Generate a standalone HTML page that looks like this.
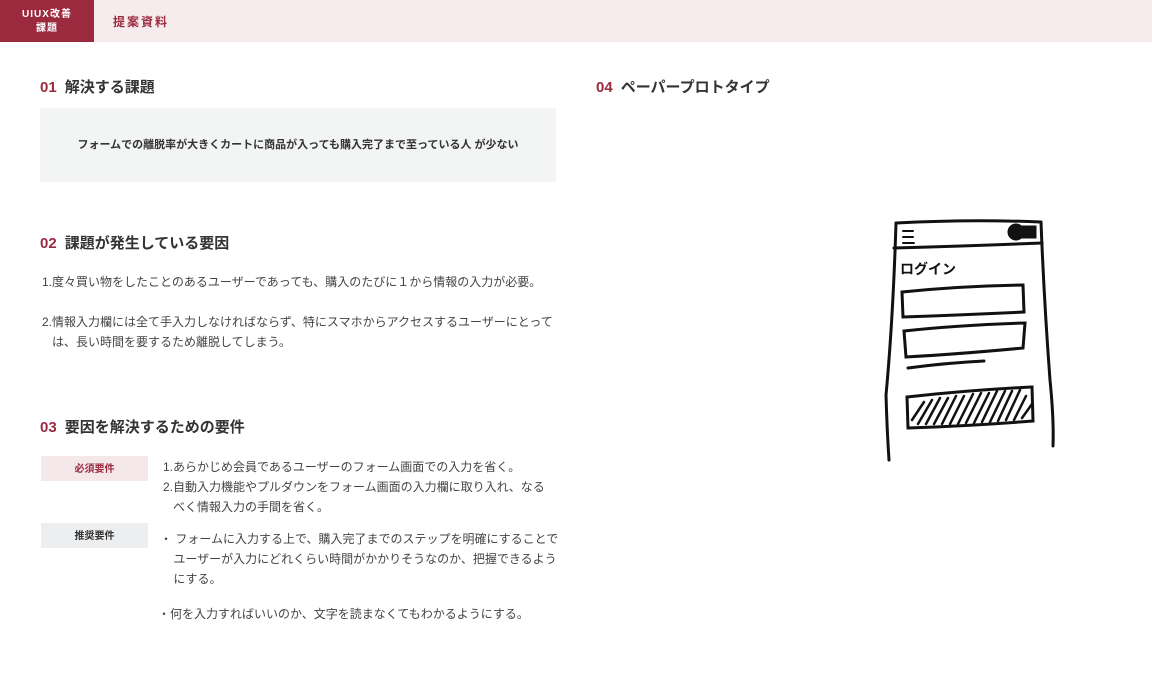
<!DOCTYPE html>
<html><head><meta charset="utf-8"><style>
*{margin:0;padding:0;box-sizing:border-box}
body{width:1152px;height:700px;background:#fff;font-family:"Liberation Sans","Noto Sans CJK JP",sans-serif;color:#333;position:relative;overflow:hidden}
.hdr{position:absolute;left:0;top:0;width:1152px;height:42px;background:#f6ecee}
.logo{position:absolute;left:0;top:0;width:94px;height:42px;background:#9b2a3f;color:#fff;font-size:10px;font-weight:bold;text-align:center;line-height:14px;padding-top:8px;letter-spacing:1px}
.tab{position:absolute;left:113px;top:13px;font-size:12px;color:#9b2a3f;font-weight:bold;letter-spacing:2px}
.h{position:absolute;font-size:15px;font-weight:bold;color:#333}
.h b{color:#9b2a3f;margin-right:8px}
.box{position:absolute;left:40px;top:108px;width:516px;height:74px;background:#f3f4f4;font-size:11px;font-weight:bold;text-align:center;line-height:74px;color:#333}
.t{position:absolute;font-size:12px;line-height:20px;color:#444}
.tag{position:absolute;left:41px;width:107px;height:25px;font-size:10px;font-weight:bold;text-align:center;line-height:27px}
</style></head><body>
<div class="hdr"></div>
<div class="logo">UIUX改善<br>課題</div>
<div class="tab">提案資料</div>
<div class="h" style="left:40px;top:76px"><b>01</b>解決する課題</div>
<div class="box">フォームでの離脱率が大きくカートに商品が入っても購入完了まで至っている人 が少ない</div>
<div class="h" style="left:40px;top:232px"><b>02</b>課題が発生している要因</div>
<div class="t" style="left:42px;top:272px">1.度々買い物をしたことのあるユーザーであっても、購入のたびに１から情報の入力が必要。</div>
<div class="t" style="left:42px;top:312px;width:520px">2.情報入力欄には全て手入力しなければならず、特にスマホからアクセスするユーザーにとって<br>&nbsp;&nbsp;&nbsp;は、長い時間を要するため離脱してしまう。</div>
<div class="h" style="left:40px;top:416px"><b>03</b>要因を解決するための要件</div>
<div class="tag" style="top:456px;background:#f4e8ea;color:#9b2a3f">必須要件</div>
<div class="tag" style="top:523px;background:#eceeef;color:#333">推奨要件</div>
<div class="t" style="left:163px;top:457px;line-height:20px">1.あらかじめ会員であるユーザーのフォーム画面での入力を省く。<br>2.自動入力機能やプルダウンをフォーム画面の入力欄に取り入れ、なる<br>&nbsp;&nbsp;&nbsp;べく情報入力の手間を省く。</div>
<div class="t" style="left:160px;top:529px;line-height:20px">・ フォームに入力する上で、購入完了までのステップを明確にすることで<br>&nbsp;&nbsp;&nbsp;&nbsp;ユーザーが入力にどれくらい時間がかかりそうなのか、把握できるよう<br>&nbsp;&nbsp;&nbsp;&nbsp;にする。</div>
<div class="t" style="left:158px;top:604px">・何を入力すればいいのか、文字を読まなくてもわかるようにする。</div>
<div class="h" style="left:596px;top:76px"><b>04</b>ペーパープロトタイプ</div>
<svg style="position:absolute;left:0;top:0" width="1152" height="700" fill="none" stroke="#111" stroke-width="3" stroke-linecap="round">
<path d="M896 223 Q970 219 1041 222"/>
<path d="M896 223 Q893 320 886 395 Q887 430 889 460"/>
<path d="M1041 222 Q1044 300 1050 380 Q1054 420 1053 446"/>
<path d="M894 248 Q970 246 1042 243"/>
<path d="M903 231h10M903 237h10M903 243h11" stroke-width="2"/>
<circle cx="1016" cy="232" r="7" fill="#111"/>
<path d="M1022 226h14v12h-14z" fill="#111" stroke-width="1"/>
<text x="900" y="274" font-size="14" font-weight="bold" fill="#111" stroke="none" font-family="Noto Sans CJK JP">ログイン</text>
<path d="M902 292 Q960 286 1023 285 L1024 312 Q960 315 903 317 Z"/>
<path d="M904 331 Q960 325 1025 323 L1023 348 Q960 354 906 357 Z"/>
<path d="M908 368 Q945 363 984 361"/>
<path d="M907 397 Q970 390 1032 387 L1033 421 Q970 426 908 428 Z"/>
<path d="M912 420l12-18M918 424l14-24M926 424l14-26M934 424l14-26M942 424l14-28M950 424l14-28M958 424l15-30M966 423l15-30M974 423l15-30M982 422l15-31M990 422l15-31M998 421l14-30M1006 420l14-30M1014 420l12-24M1022 418l10-14" stroke-width="2.5"/>
</svg>
</body></html>
